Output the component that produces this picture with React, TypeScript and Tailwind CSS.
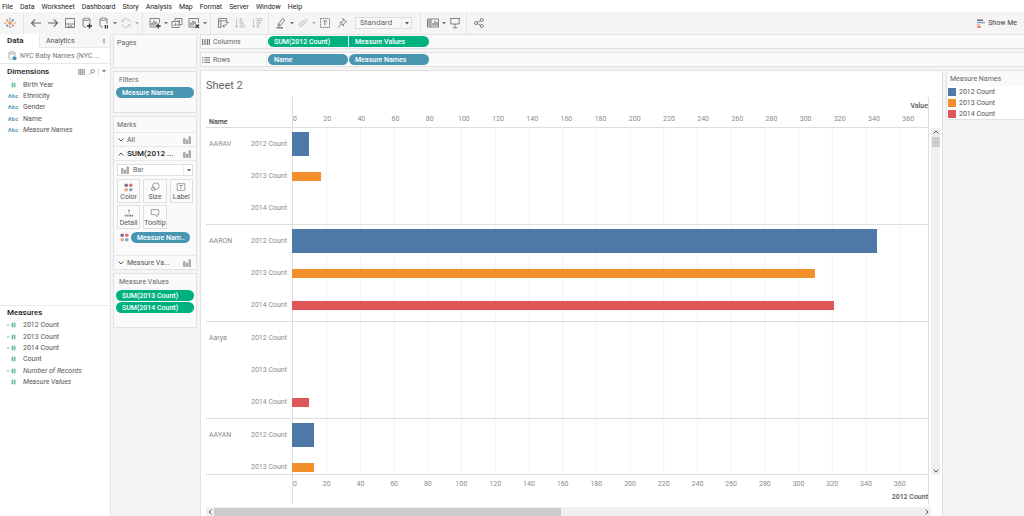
import { ReactNode, useState } from "react";
import clsx from "clsx";

type Measure = "2012 Count" | "2013 Count" | "2014 Count";

interface NameGroup {
    name: string;
    rows: { measure: Measure; value: number }[];
}

const MENU = ["File", "Data", "Worksheet", "Dashboard", "Story", "Analysis", "Map", "Format", "Server", "Window", "Help"];

const DIMENSIONS = [
    { label: "Birth Year", type: "num" },
    { label: "Ethnicity", type: "abc" },
    { label: "Gender", type: "abc" },
    { label: "Name", type: "abc" },
    { label: "Measure Names", type: "abc", generated: true },
];

const MEASURES = [
    { label: "2012 Count", type: "calc" },
    { label: "2013 Count", type: "calc" },
    { label: "2014 Count", type: "calc" },
    { label: "Count", type: "num" },
    { label: "Number of Records", type: "calc", generated: true },
    { label: "Measure Values", type: "num", generated: true },
];

const COLORS: Record<Measure, string> = {
    "2012 Count": "bg-[#4e79a7]",
    "2013 Count": "bg-[#f28e2b]",
    "2014 Count": "bg-[#e15759]",
};

const GROUPS: NameGroup[] = [
    {
        name: "AARAV",
        rows: [
            { measure: "2012 Count", value: 10 },
            { measure: "2013 Count", value: 17 },
            { measure: "2014 Count", value: 0 },
        ],
    },
    {
        name: "AARON",
        rows: [
            { measure: "2012 Count", value: 346 },
            { measure: "2013 Count", value: 305 },
            { measure: "2014 Count", value: 316 },
        ],
    },
    {
        name: "Aarya",
        rows: [
            { measure: "2012 Count", value: 0 },
            { measure: "2013 Count", value: 0 },
            { measure: "2014 Count", value: 10 },
        ],
    },
    {
        name: "AAYAN",
        rows: [
            { measure: "2012 Count", value: 13 },
            { measure: "2013 Count", value: 13 },
        ],
    },
];

// The two axes are not synchronised, so each has its own upper bound
const VALUE_MAX = 371.6;
const COUNT_MAX = 376.8;
const TICKS = Array.from({ length: 19 }, (_, i) => i * 20);

function Icon({ children, className = "h-3 w-3" }: { children: ReactNode; className?: string }) {
    return (
        <svg
            viewBox="0 0 12 12"
            className={clsx("shrink-0", className)}
            fill="none"
            stroke="currentColor"
            strokeWidth="0.8"
            aria-hidden="true"
        >
            {children}
        </svg>
    );
}

function Caret() {
    return (
        <svg viewBox="0 0 4 3" className="h-[3px] w-1 shrink-0" fill="currentColor" aria-hidden="true">
            <path d="M0 0h4L2 2.6z" />
        </svg>
    );
}

function Chevron({ up }: { up?: boolean }) {
    return (
        <svg viewBox="0 0 6 4" className="h-1 w-1.5 shrink-0" fill="none" stroke="currentColor" aria-hidden="true">
            <path d={up ? "M.5 3.5 3 1l2.5 2.5" : "M.5 .5 3 3 5.5 .5"} />
        </svg>
    );
}

function BarsIcon() {
    return (
        <svg viewBox="0 0 8 8" className="h-2 w-2 shrink-0" fill="#c4c4c4" stroke="#8c8c8c" strokeWidth="0.7" aria-hidden="true">
            <path d="M.6 2.5H2v5H.6zM3.3 4h1.400v3.500H3.300zM6 .8h1.400v6.700H6z" />
        </svg>
    );
}

function ColorDots() {
    return (
        <svg viewBox="0 0 9 9" className="h-[9px] w-[9px] shrink-0" aria-hidden="true">
            <circle cx="2.2" cy="2.2" r="1.8" fill="#80688f" />
            <circle cx="6.8" cy="2.2" r="1.8" fill="#e36f77" />
            <circle cx="2.2" cy="6.8" r="1.8" fill="#f0a37a" />
            <circle cx="6.8" cy="6.8" r="1.8" fill="#7aa8d4" />
        </svg>
    );
}

function ToolButton({ label, dim, children }: { label: string; dim?: boolean; children: ReactNode }) {
    return (
        <button
            type="button"
            aria-label={label}
            className={clsx("flex h-4 w-[17px] shrink-0 items-center justify-center", dim ? "text-[#bcbcbc]" : "text-[#666]")}
        >
            <Icon>{children}</Icon>
        </button>
    );
}

function CaretButton({ label, dim }: { label: string; dim?: boolean }) {
    return (
        <button
            type="button"
            aria-label={label}
            className={clsx("flex h-4 w-[5px] shrink-0 items-center justify-center", dim ? "text-[#b4b4b4]" : "text-[#777]")}
        >
            <Caret />
        </button>
    );
}

function Separator() {
    return <span className="mx-[3px] h-full w-px shrink-0 bg-[#e6e6e6]" />;
}

function Toolbar() {
    const [fit, setFit] = useState("Standard");

    return (
        <div className="flex h-[22px] shrink-0 items-center bg-[#f5f5f5]">
            <button type="button" aria-label="Start page" className="flex w-5 shrink-0 items-center justify-center">
                <Icon>
                    <path d="M6 3.8v4.400M3.800 6h4.400" stroke="#e8762c" strokeWidth="1.1" />
                    <path d="M3.3 2v2.800M1.900 3.400h2.800M8.700 7.200V10M7.300 8.600h2.800" stroke="#e07a5f" />
                    <path d="M8.7 2v2.800M7.300 3.400h2.800M3.300 7.200V10M1.900 8.600h2.800" stroke="#5b879b" />
                    <path d="M6 .8v2M5 1.800h2M6 9.200v2M5 10.200h2" stroke="#7e9fc4" />
                    <path d="M1.2 5v2M.4 6h1.800M10.800 5v2M9.800 6h1.800" stroke="#e3a15b" />
                </Icon>
            </button>
            <Separator />
            <ToolButton label="Undo">
                <path d="M11 6H1.500M5.200 2.300 1.500 6l3.700 3.700" strokeWidth="1.1" />
            </ToolButton>
            <ToolButton label="Redo">
                <path d="M1 6h9.500M6.800 2.300 10.500 6l-3.700 3.700" strokeWidth="1.1" />
            </ToolButton>
            <ToolButton label="Save">
                <path d="M1.500 1.500h9v9h-9zM1.500 7h9M4 10.500V9h4v1.500" />
            </ToolButton>
            <ToolButton label="New data source">
                <path d="M2 2.200v6.600c0 .7 1.200 1.200 3 1.200M9 2.200v3.600" />
                <ellipse cx="5.5" cy="2.2" rx="3.5" ry="1.2" />
                <path d="M8.500 6.500v5M6 9h5" stroke="#333" strokeWidth="1.3" />
            </ToolButton>
            <ToolButton label="Pause auto updates">
                <path d="M2 2.200v6.600c0 .7 1.200 1.200 3 1.200M9 2.200v4.600" />
                <ellipse cx="5.5" cy="2.2" rx="3.5" ry="1.2" />
                <path d="M7.300 8v3.500M9.300 8v3.500" stroke="#333" strokeWidth="1.2" />
            </ToolButton>
            <CaretButton label="Auto update options" />
            <ToolButton label="Run update" dim>
                <path d="M10.300 5A4.500 4.500 0 0 0 2 4.200M1.700 7A4.500 4.500 0 0 0 10 7.800M2 2v2.400h2.200M10 10V7.600H7.800" />
            </ToolButton>
            <CaretButton label="Run update options" dim />
            <Separator />
            <ToolButton label="New worksheet">
                <path d="M7 10H1V1.500h9.500V6" />
                <path d="M3 8.500V5.500M5 8.500V3.500M7 7.500V4.500" strokeWidth="1.1" />
                <path d="M9.200 6.500v5M6.700 9h5" stroke="#333" strokeWidth="1.3" />
            </ToolButton>
            <CaretButton label="New sheet options" />
            <ToolButton label="Duplicate">
                <path d="M4 4V1.500h7v6H8M1 4.500h7v6H1z" />
                <path d="M3 9V7.500M4.500 9V6M6 9V7M6.500 4V3M8.500 6V3" strokeWidth="0.7" />
            </ToolButton>
            <ToolButton label="Clear sheet">
                <path d="M7 10H1V1.500h9.500V6" />
                <path d="M3 8.500V5.500M5 8.500V3.500M7 7V4.500" strokeWidth="1.1" />
                <path d="m7.500 7.500 3.500 3.500M11 7.500 7.500 11" stroke="#333" strokeWidth="1.3" />
            </ToolButton>
            <CaretButton label="Clear options" />
            <Separator />
            <ToolButton label="Swap rows and columns">
                <path d="M1.500 1.500h8v2.300h-8zM1.500 3.800v6.700h2.300V3.800M10.300 4.500c0 3-1.500 4.700-4.600 4.700M7.300 7.500 5.700 9.200l1.600 1.600M8.800 6l1.500-1.500L11.500 6" />
            </ToolButton>
            <ToolButton label="Sort ascending" dim>
                <path d="M2.500 1.500v9M1 9l1.500 1.500L4 9M6 1.500h1.500v2H6zM6 4.800h3v2H6zM6 8.200h4.800v2H6z" />
            </ToolButton>
            <ToolButton label="Sort descending" dim>
                <path d="M2.500 1.500v9M1 9l1.500 1.500L4 9M6 1.500h5v2H6zM6 4.800h3.300v2H6zM6 8.200h1.500v2H6z" />
            </ToolButton>
            <Separator />
            <ToolButton label="Highlight">
                <path d="m3.500 7 4.200-5.500 2 1.500-4.200 5.500-2.500.8zM3.500 7l2 1.500" />
                <path d="M1.500 10.800H8" strokeWidth="1.2" />
            </ToolButton>
            <CaretButton label="Highlight options" />
            <ToolButton label="Group members" dim>
                <path d="m8.500 4-4 4.300c-.8.900-2-.2-1.200-1.100l4.500-4.800c1.300-1.300 3.200.4 2 1.700L5.200 9c-1.900 1.900-4.500-.4-2.700-2.300L6 3" />
            </ToolButton>
            <CaretButton label="Group options" dim />
            <ToolButton label="Show mark labels">
                <path d="M1.500 1.500h9v9h-9z" strokeDasharray="1.5 .6" />
                <path d="M4 4h4M6 4v4.500" />
            </ToolButton>
            <ToolButton label="Fix axes">
                <path d="m7 1.500 3.500 3.500-1.200.2-1.800 1.900.2 2-3.800-3.800 2 .1 1.500-2.200zM5.500 7l-3.500 3.500" />
            </ToolButton>
            <span className="relative mx-[5px] w-[57px] shrink-0">
                <select
                    aria-label="Fit"
                    value={fit}
                    onChange={(e) => setFit(e.target.value)}
                    className="block h-3 w-full appearance-none border border-[#ddd] bg-[#f8f8f8] pl-1 text-[8px] leading-[10px] text-[#666] outline-none"
                >
                    <option>Standard</option>
                    <option>Fit Width</option>
                    <option>Fit Height</option>
                    <option>Entire View</option>
                </select>
                <span className="pointer-events-none absolute inset-y-0 right-0 flex w-[11px] items-center justify-center border-l border-[#e6e6e6] text-[#555]">
                    <Caret />
                </span>
            </span>
            <Separator />
            <ToolButton label="Show or hide cards">
                <path d="M.5 2h11v8H.5zM4 2v8" />
                <path d="M1 4h2.500M1 6h2.500M1 8h2.500M6 8.800V6M8 8.800V4M10 8.800V5" strokeWidth="1.1" />
            </ToolButton>
            <CaretButton label="Card options" />
            <ToolButton label="Presentation mode">
                <path d="M.8 1.500h10.400M1.800 1.500V7h8.400V1.500M6 7v3.500M3.800 10.800h4.400" />
            </ToolButton>
            <Separator />
            <ToolButton label="Share">
                <circle cx="3" cy="6" r="1.5" />
                <circle cx="8.8" cy="3" r="1.5" />
                <circle cx="8.8" cy="9" r="1.5" />
                <path d="m4.300 5.300 3.200-1.600M4.300 6.700l3.200 1.600" />
            </ToolButton>
            <button type="button" className="ml-auto mr-[7px] flex items-center gap-[3px] text-[#444]">
                <svg viewBox="0 0 8 9" className="h-[9px] w-2" aria-hidden="true">
                    <path d="M0 .5h6V2H0z" fill="#75608c" />
                    <path d="M0 2.800h8v1.500H0z" fill="#86a9cf" />
                    <path d="M0 5.100h3v1.500H0z" fill="#f2b28c" />
                    <path d="M0 7.200h4v1.500H0z" fill="#e56a72" />
                </svg>
                Show Me
            </button>
        </div>
    );
}

function FieldIcon({ type }: { type: string }) {
    if (type === "abc") {
        return <span className="w-3 text-center text-[6px] font-bold text-[#5fa3bc]">Abc</span>;
    }
    return (
        <svg viewBox="0 0 12 8" className="h-2 w-3" fill="none" stroke="#78bf9f" aria-hidden="true">
            <path d="M5.500 1.500v5M7.500 1.500v5M4 3h5M4 5h5" />
            {type === "calc" && <path d="M0 4h2.200" strokeWidth="1.2" />}
        </svg>
    );
}

function FieldList({ fields, className }: { fields: { label: string; type: string; generated?: boolean }[]; className: string }) {
    return (
        <ul className={clsx("grid auto-rows-fr pl-[7px] text-[#555]", className)}>
            {fields.map((f) => (
                <li key={f.label} className="flex items-center gap-1">
                    <FieldIcon type={f.type} />
                    <span className={clsx(f.generated && "italic")}>{f.label}</span>
                </li>
            ))}
        </ul>
    );
}

function DataPane() {
    return (
        <aside className="flex w-[111px] shrink-0 flex-col border-r border-[#e4e4e4] bg-white">
            <div className="flex h-[14px] shrink-0">
                <button type="button" className="w-[39px] pl-[7px] text-left text-[8px] font-bold text-[#333]">
                    Data
                </button>
                <button
                    type="button"
                    className="flex flex-1 items-center justify-between border-b border-l border-[#e8e8e8] bg-[#f7f7f7] pl-[6px] pr-1 text-[#555]"
                >
                    Analytics
                    <svg viewBox="0 0 4 6" className="h-1.5 w-1" fill="#7f96ad" aria-hidden="true">
                        <path d="M2 .5 3.500 2.500h-3zM2 5.500.5 3.500h3z" />
                    </svg>
                </button>
            </div>
            <div className="flex h-4 shrink-0 items-center gap-[3px] border-b border-[#e8e8e8] pl-2 text-[#777]">
                <svg viewBox="0 0 9 10" className="h-[10px] w-[9px] shrink-0" fill="none" stroke="#999" strokeWidth="0.8" aria-hidden="true">
                    <path d="M1 1.800v5.400c0 .7 1.200 1.200 2.500 1.200M7 1.800V5" />
                    <ellipse cx="4" cy="1.8" rx="3" ry="1.1" />
                    <circle cx="6.5" cy="7.3" r="2" fill="#3f8fb0" stroke="none" />
                </svg>
                NYC Baby Names (NYC ...
            </div>
            <section className="min-h-0 flex-[8] border-b border-[#ececec]">
                <div className="flex h-[15px] items-center pl-[7px] pr-1 text-[#777]">
                    <h2 className="flex-1 text-[8px] font-medium text-[#222]">Dimensions</h2>
                    <button type="button" aria-label="View data">
                        <svg viewBox="0 0 7 6" className="h-1.5 w-[7px]" fill="none" stroke="currentColor" strokeWidth="0.6" aria-hidden="true">
                            <path d="M.4 .4h6.200v5.200H.4zM.4 2h6.200M.4 3.800h6.200M2.400 .4v5.200M4.500 .4v5.200" />
                        </svg>
                    </button>
                    <button type="button" aria-label="Find field" className="ml-1">
                        <svg viewBox="0 0 6 6" className="h-1.5 w-1.5" fill="none" stroke="currentColor" strokeWidth="0.8" aria-hidden="true">
                            <circle cx="3.7" cy="2.2" r="1.7" />
                            <path d="M2.400 3.500.4 5.600" />
                        </svg>
                    </button>
                    <span className="mx-[3px] h-2 w-px bg-[#ddd]" />
                    <button type="button" aria-label="Pane options">
                        <Caret />
                    </button>
                </div>
                <FieldList fields={DIMENSIONS} className="h-[57px]" />
            </section>
            <section className="min-h-0 flex-[7]">
                <h2 className="flex h-[14px] items-center pl-[7px] text-[8px] font-medium text-[#222]">Measures</h2>
                <FieldList fields={MEASURES} className="h-[68px]" />
            </section>
        </aside>
    );
}

function Pill({ children, green, className }: { children: ReactNode; green?: boolean; className?: string }) {
    return (
        <button
            type="button"
            className={clsx(
                "flex h-[11px] items-center pl-[6px] text-left font-medium whitespace-nowrap text-white",
                green ? "bg-[#00b180]" : "bg-[#4996b2]",
                className,
            )}
        >
            {children}
        </button>
    );
}

function Card({ title, className, children }: { title: string; className?: string; children?: ReactNode }) {
    return (
        <section className={clsx("border border-[#e2e2e2] bg-[#fafafa]", className)}>
            <h2 className="flex h-[15px] items-center pl-[3px] text-[#666]">{title}</h2>
            {children}
        </section>
    );
}

function MarksRow({ label, open }: { label: string; open?: boolean }) {
    return (
        <button
            type="button"
            aria-expanded={!!open}
            className={clsx(
                "flex w-full items-center gap-[3px] border-t border-[#e8e8e8] pl-1 pr-[5px] text-left text-[#555]",
                open ? "h-[15px] border-b" : "h-[14px]",
            )}
        >
            <Chevron up={open} />
            <span className={clsx("flex-1", open && "text-[8px] font-medium text-[#222]")}>{label}</span>
            <BarsIcon />
        </button>
    );
}

function MarkButton({ label, children }: { label: string; children: ReactNode }) {
    return (
        <button
            type="button"
            className="flex h-6 flex-col items-center justify-between border border-[#e0e0e0] bg-[#fbfbfb] pt-0.5 text-[#555]"
        >
            <span className="flex h-[10px] items-center text-[#777]">{children}</span>
            <span className="leading-[9px]">{label}</span>
        </button>
    );
}

function MarksCard() {
    return (
        <Card title="Marks">
            <MarksRow label="All" />
            <MarksRow label="SUM(2012 ..." open />
            <div className="px-[3px] pb-3 pt-[3px]">
                <div className="relative text-[#666]">
                    <span className="absolute left-1 top-0.5">
                        <BarsIcon />
                    </span>
                    <select
                        aria-label="Mark type"
                        className="block h-3 w-full appearance-none border border-[#e0e0e0] bg-white pl-[15px] leading-[10px] outline-none"
                    >
                        <option>Bar</option>
                        <option>Line</option>
                        <option>Area</option>
                    </select>
                    <span className="pointer-events-none absolute inset-y-0 right-0 flex w-[10px] items-center justify-center border-l border-[#ececec]">
                        <Caret />
                    </span>
                </div>
                <div className="mt-[3px] grid grid-cols-3 gap-x-[3px] gap-y-0.5">
                    <MarkButton label="Color">
                        <ColorDots />
                    </MarkButton>
                    <MarkButton label="Size">
                        <Icon className="h-[10px] w-[10px]">
                            <circle cx="7" cy="5" r="4" />
                            <circle cx="3.8" cy="8.2" r="2.2" />
                        </Icon>
                    </MarkButton>
                    <MarkButton label="Label">
                        <Icon className="h-[10px] w-[10px]">
                            <path d="M1.500 2h9v8h-9zM4 4.200h4M6 4.200v4" />
                        </Icon>
                    </MarkButton>
                    <MarkButton label="Detail">
                        <Icon className="h-[10px] w-[10px]">
                            <path d="M6 2.200v2M2 8.200v2M4.700 8.200v2M7.400 8.200v2M10 8.200v2" strokeWidth="1.8" />
                            <path d="M6 4.500v2.500" strokeDasharray="1 .8" />
                        </Icon>
                    </MarkButton>
                    <MarkButton label="Tooltip">
                        <Icon className="h-[10px] w-[10px]">
                            <path d="M1.500 2h9v6H8.300v2.500L5.800 8H1.500z" />
                        </Icon>
                    </MarkButton>
                </div>
                <div className="mt-[3px] flex items-center gap-[2px] pl-[3px]">
                    <ColorDots />
                    <Pill className="w-[59px] rounded-full">Measure Nam..</Pill>
                </div>
            </div>
            <MarksRow label="Measure Va..." />
        </Card>
    );
}

function Shelf({ title, icon, children }: { title: string; icon: ReactNode; children: ReactNode }) {
    return (
        <section className="flex h-[15px] shrink-0 items-center border border-r-0 border-[#e2e2e2] bg-[#fafafa]">
            <h2 className="flex h-full w-[66px] items-center gap-[3px] border-r border-[#ebebeb] pl-px text-[#666]">
                <Icon className="h-2 w-2">{icon}</Icon>
                {title}
            </h2>
            <div className="ml-px flex gap-px">{children}</div>
        </section>
    );
}

function Axis({ max, title, bottom }: { max: number; title: string; bottom?: boolean }) {
    return (
        <svg className="h-full w-full overflow-visible text-[7px]" role="img" aria-label={`${title} axis`}>
            {TICKS.map((t) => (
                <text
                    key={t}
                    x={`${(t / max) * 100}%`}
                    y={bottom ? 11 : 24}
                    textAnchor={t === 0 ? "start" : "middle"}
                    fill="#8a8a8a"
                >
                    {t}
                </text>
            ))}
            <text x="100%" y={bottom ? 24 : 11} textAnchor="end" fill="#555" fontWeight="500">
                {title}
            </text>
        </svg>
    );
}

function Chart() {
    return (
        <div className="flex min-h-0 flex-1 flex-col">
            <div className="mr-[13px] flex h-[31px] shrink-0 border-b border-[#dedede] pl-[3px]">
                <span className="w-[83px] self-end font-medium text-[#444]">Name</span>
                <div className="flex-1 border-l border-r border-[#dedede]">
                    <Axis max={VALUE_MAX} title="Value" />
                </div>
            </div>
            <div className="flex min-h-0 flex-1">
                <div className="relative min-w-0 flex-1 overflow-hidden border-b border-[#dedede]">
                    {/* Gridlines run behind every pane */}
                    <div className="absolute inset-y-0 left-[86px] right-0 border-l border-r border-[#dedede]">
                        <svg className="h-full w-full" aria-hidden="true">
                            {TICKS.slice(1).map((t) => (
                                <line
                                    key={t}
                                    x1={`${(t / COUNT_MAX) * 100}%`}
                                    x2={`${(t / COUNT_MAX) * 100}%`}
                                    y1="0"
                                    y2="100%"
                                    stroke="#f3f3f3"
                                />
                            ))}
                        </svg>
                    </div>
                    {GROUPS.map((group) => (
                        <div key={group.name} className="relative flex border-b border-[#dedede] pl-[3px]">
                            <span className="flex h-8 w-[39px] items-center text-[#8a8a8a]">{group.name}</span>
                            <div className="flex-1">
                                {group.rows.map(({ measure, value }) => {
                                    const max = measure === "2012 Count" ? COUNT_MAX : VALUE_MAX;
                                    return (
                                        <div key={measure} className="flex h-8 items-center">
                                            <span className="w-[44px] shrink-0 pr-[5px] text-right whitespace-nowrap text-[#8a8a8a]">{measure}</span>
                                            <div className="flex-1">
                                                <div
                                                    className={clsx(COLORS[measure], measure === "2012 Count" ? "h-6" : "h-[9px]")}
                                                    style={{ width: `${(value / max) * 100}%` }}
                                                />
                                            </div>
                                        </div>
                                    );
                                })}
                            </div>
                        </div>
                    ))}
                </div>
                <div className="ml-[2px] mr-[2px] flex w-[9px] shrink-0 flex-col items-center justify-between bg-[#f0f0f0] py-[2px] text-[#555]">
                    <div className="flex w-full flex-col items-center gap-[3px]">
                        <Chevron up />
                        <span className="h-[10px] w-2 bg-[#cdcdcd]" />
                    </div>
                    <Chevron />
                </div>
            </div>
            <div className="mr-[13px] flex h-[30px] shrink-0 pl-[86px]">
                <div className="flex-1 border-l border-r border-[#dedede]">
                    <Axis max={COUNT_MAX} title="2012 Count" bottom />
                </div>
            </div>
            <div className="mr-[11px] mt-0.5 flex h-[9px] shrink-0 items-center bg-[#f0f0f0] text-[#555]">
                <span className="flex w-2 -rotate-90 justify-center">
                    <Chevron up />
                </span>
                <div className="flex h-full flex-1 items-center">
                    <span className="h-2 w-[49%] bg-[#cbcbcb]" />
                </div>
                <span className="flex w-2 rotate-90 justify-center">
                    <Chevron up />
                </span>
            </div>
        </div>
    );
}

function Legend() {
    return (
        <aside className="w-[78px] shrink-0">
            <section className="border border-r-0 border-[#e2e2e2] bg-white">
                <h2 className="flex h-[15px] items-center bg-[#fafafa] pl-[3px] text-[#666]">Measure Names</h2>
                <ul className="pl-px text-[#555]">
                    {(Object.keys(COLORS) as Measure[]).map((m) => (
                        <li key={m} className="flex h-[11px] items-center gap-[3px]">
                            <span className={clsx("h-2 w-2", COLORS[m])} />
                            {m}
                        </li>
                    ))}
                </ul>
            </section>
        </aside>
    );
}

export default function App() {
    return (
        <div className="flex h-screen flex-col overflow-hidden bg-[#f4f4f4] font-['Roboto','Liberation_Sans',sans-serif] text-[7px] leading-[10px]">
            <nav className="flex h-3 shrink-0 items-center gap-[7px] bg-white pl-[2px] pt-px text-[#222]">
                {MENU.map((item) => (
                    <button key={item} type="button">
                        {item}
                    </button>
                ))}
            </nav>
            <Toolbar />
            <div className="flex min-h-0 flex-1">
                <DataPane />
                <div className="ml-[2px] flex w-[84px] shrink-0 flex-col gap-[3px]">
                    <Card title="Pages" className="h-[34px]" />
                    <Card title="Filters" className="h-[42px] px-[2px]">
                        <Pill className="w-full rounded-full">Measure Names</Pill>
                    </Card>
                    <MarksCard />
                    <Card title="Measure Values" className="flex h-[55px] flex-col gap-px px-[2px]">
                        <Pill green className="w-full rounded-full">
                            SUM(2013 Count)
                        </Pill>
                        <Pill green className="w-full rounded-full">
                            SUM(2014 Count)
                        </Pill>
                    </Card>
                </div>
                <main className="ml-[3px] flex min-w-0 flex-1 flex-col gap-[3px]">
                    <Shelf title="Columns" icon={<path d="M1 1.500v9M4.500 1.500v9M8 1.500v9M11 1.500v9" strokeWidth="1.6" />}>
                        <Pill green className="w-20 rounded-l-full">
                            SUM(2012 Count)
                        </Pill>
                        <Pill green className="w-20 rounded-r-full">
                            Measure Values
                        </Pill>
                    </Shelf>
                    <Shelf title="Rows" icon={<path d="M0 2.500h2M0 6h2M0 9.500h2M3.500 2.500H12M3.500 6H12M3.500 9.500H12" strokeWidth="1.4" />}>
                        <Pill className="w-20 rounded-full">Name</Pill>
                        <Pill className="w-20 rounded-full">Measure Names</Pill>
                    </Shelf>
                    <div className="flex min-h-0 flex-1 gap-[3px]">
                        <section className="flex min-w-0 flex-1 flex-col border border-b-0 border-[#e2e2e2] bg-white pl-[5px]">
                            <h1 className="flex h-[26px] shrink-0 items-center pt-[3px] text-[11px] text-[#666]">Sheet 2</h1>
                            <Chart />
                        </section>
                        <Legend />
                    </div>
                </main>
            </div>
        </div>
    );
}
